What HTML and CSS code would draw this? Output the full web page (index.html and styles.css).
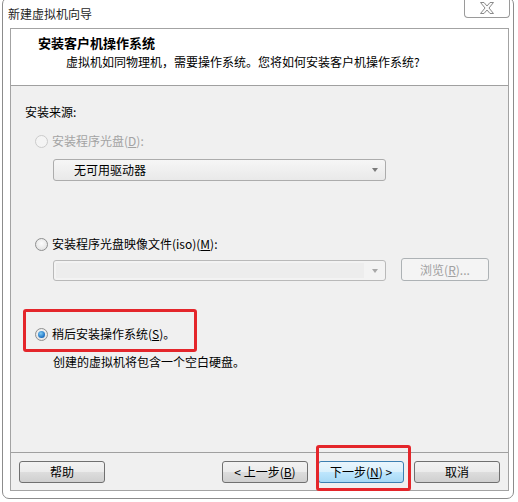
FILE: index.html
```html
<!DOCTYPE html>
<html lang="zh-CN">
<head>
  <meta charset="UTF-8" />
  <title>新建虚拟机向导</title>
  <link rel="stylesheet" href="styles.css">
</head>
<body>

<div class="window">
  <div class="titlebar">
    <span class="title">新建虚拟机向导</span>
    <button class="close" aria-label="关闭">
      <svg width="14" height="12" viewBox="0 0 14 12">
        <polygon points="0.5,0.5 4,0.5 7,4 10,0.5 13.5,0.5 9,6 13.5,11.5 10,11.5 7,8 4,11.5 0.5,11.5 5,6" fill="#fbfbfb" stroke="#8a8a8a" stroke-width="1"/>
      </svg>
    </button>
  </div>

  <div class="client">
    <div class="header">
      <div class="head-title">安装客户机操作系统</div>
      <div class="head-sub">虚拟机如同物理机，需要操作系统。您将如何安装客户机操作系统?</div>
    </div>

    <div class="content">
      <div class="label">安装来源:</div>

      <div class="option disabled">
        <span class="radio"></span>
        <span>安装程序光盘(<u>D</u>):</span>
      </div>
      <div class="select">
        <span>无可用驱动器</span>
        <span class="arrow"></span>
      </div>

      <div class="option option-iso">
        <span class="radio"></span>
        <span>安装程序光盘映像文件(iso)(<u>M</u>):</span>
      </div>
      <div class="iso-row">
        <div class="combo">
          <span class="combo-field"></span>
          <span class="arrow light"></span>
        </div>
        <button class="btn browse">浏览(<u>R</u>)...</button>
      </div>

      <div class="mark">
        <div class="option">
          <span class="radio checked"></span>
          <span>稍后安装操作系统(<u>S</u>)。</span>
        </div>
      </div>
      <div class="note">创建的虚拟机将包含一个空白硬盘。</div>
    </div>

    <div class="footer">
      <button class="btn">帮助</button>
      <div class="nav">
        <button class="btn">&lt; 上一步(<u>B</u>)</button>
        <span class="marked">
          <button class="btn primary">下一步(<u>N</u>) &gt;</button>
        </span>
        <button class="btn">取消</button>
      </div>
    </div>
  </div>
</div>

</body>
</html>
```

FILE: styles.css
```css
body {
  margin: 0;
  background: #fff;
  font-family: "Noto Sans CJK SC", "Microsoft YaHei", sans-serif;
  font-size: 12px;
  color: #000;
}
.window {
  box-sizing: border-box;
  width: 512px;
  height: 502px;
  margin: -3px 0 0 2px;
  border: 1px solid #8c8c8c;
  border-radius: 7px;
  padding: 0 4px 7px 7px;
  background: #fff;
  display: flex;
  flex-direction: column;
}
.titlebar {
  height: 30px;
  display: flex;
  justify-content: space-between;
  align-items: flex-start;
}
.title {
  margin: 8px 0 0 -2px;
  line-height: 16px;
  color: #1e1e1e;
}
.close {
  width: 46px;
  height: 20px;
  margin-right: -1px;
  padding: 0;
  border: 1px solid #9a9a9a;
  border-top: none;
  border-radius: 0 0 4px 4px;
  background: #fff;
  display: flex;
  align-items: center;
  justify-content: center;
}
.close svg {
  display: block;
  margin-top: 1px;
}

.client {
  flex: 1;
  border: 1px solid #a3a3a3;
  display: flex;
  flex-direction: column;
  background: #f0f0f0;
}
.header {
  height: 57px;
  box-sizing: border-box;
  padding: 5px 0 0 27px;
  background: #fff;
  border-bottom: 1px solid #a0a0a0;
}
.head-title {
  font-size: 13px;
  font-weight: bold;
  line-height: 18px;
}
.head-sub {
  margin: 2px 0 0 28px;
  line-height: 16px;
}

.content {
  flex: 1;
  padding: 18px 0 0 14px;
  border-bottom: 1px solid #a0a0a0;
  display: flex;
  flex-direction: column;
  align-items: flex-start;
}
.label {
  line-height: 16px;
}
.option {
  display: flex;
  align-items: center;
  gap: 4px;
  margin: 13px 0 0 10px;
  line-height: 16px;
}
.option.disabled {
  color: #a3a3a3;
}
.option-iso {
  margin-top: 55px;
}
.radio {
  box-sizing: border-box;
  width: 13px;
  height: 13px;
  border-radius: 50%;
  border: 1px solid #8e8f8f;
  background: radial-gradient(circle at 50% 40%, #fcfcfc, #dcdcdc);
  display: flex;
  align-items: center;
  justify-content: center;
}
.disabled .radio {
  border-color: #cbcbcb;
  background: #f4f4f4;
}
.radio.checked::after {
  content: "";
  width: 7px;
  height: 7px;
  border-radius: 50%;
  background: radial-gradient(circle at 40% 35%, #7ecbf5, #1a6ec0 70%, #0d4b8f);
}

.select {
  box-sizing: border-box;
  width: 333px;
  height: 22px;
  margin: 10px 0 0 28px;
  padding: 0 7px 0 20px;
  border: 1px solid #acacac;
  border-radius: 3px;
  background: linear-gradient(#f6f6f6, #e9e9e9);
  display: flex;
  align-items: center;
  justify-content: space-between;
  line-height: 16px;
}
.arrow {
  width: 0;
  height: 0;
  border-left: 3.5px solid transparent;
  border-right: 3.5px solid transparent;
  border-top: 4px solid #7a7a7a;
}
.arrow.light {
  border-top-color: #a8a8a8;
}

.iso-row {
  display: flex;
  align-items: flex-end;
  gap: 15px;
  margin: 6px 0 0 28px;
}
.combo {
  box-sizing: border-box;
  width: 333px;
  height: 21px;
  padding: 2px 7px 2px 2px;
  border: 1px solid #b9b9b9;
  border-radius: 3px;
  background: #f3f3f3;
  display: flex;
  align-items: center;
  gap: 8px;
}
.combo-field {
  flex: 1;
  align-self: stretch;
  background: #ededed;
}

.btn {
  box-sizing: border-box;
  width: 86px;
  height: 22px;
  padding: 0;
  border: 1px solid #707070;
  border-radius: 3px;
  background: linear-gradient(#f2f2f2 0%, #ebebeb 50%, #dddddd 51%, #cfcfcf 100%);
  font-family: inherit;
  font-size: 12px;
  color: #000;
  line-height: 16px;
}
.browse {
  width: 88px;
  height: 23px;
  border-color: #adb2b5;
  background: #f4f4f4;
  color: #a0a0a0;
}
.primary {
  border-color: #3c7fb1;
  background: linear-gradient(#eaf6fd 0%, #d9f0fc 50%, #bee6fd 51%, #a7d9f5 100%);
}

.mark {
  margin: 28px 0 0 -2px;
  width: 168px;
  height: 23px;
  border: 3px solid #e4262b;
  border-radius: 3px;
  padding-top: 14px;
  box-sizing: content-box;
}
.mark .option {
  margin: 0 0 0 9px;
}
.note {
  margin: 2px 0 0 28px;
  line-height: 16px;
}

.footer {
  padding: 8px 8px 7px;
  display: flex;
  justify-content: space-between;
}
.nav {
  display: flex;
  gap: 10px;
}
.marked {
  position: relative;
  display: flex;
}
.marked::after {
  content: "";
  position: absolute;
  left: -2px;
  right: -7px;
  top: -16px;
  bottom: -8px;
  border: 3px solid #e4262b;
  border-radius: 3px;
}
```
